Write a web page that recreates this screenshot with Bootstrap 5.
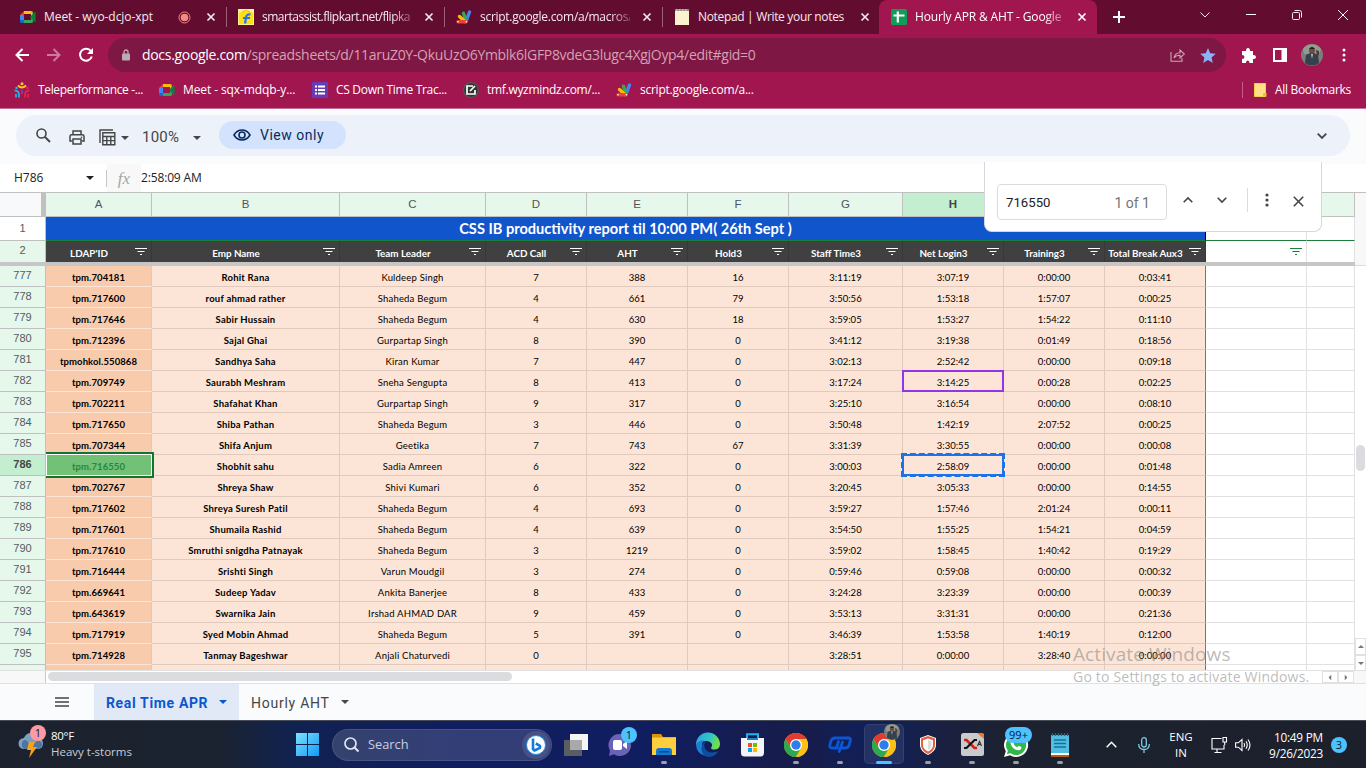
<!DOCTYPE html>
<html lang="en">
<head>
<meta charset="utf-8">
<title>Hourly APR &amp; AHT - Google Sheets</title>
<link href="https://cdn.jsdelivr.net/npm/bootstrap@5.3.0/dist/css/bootstrap.min.css" rel="stylesheet">
<style>
body{width:1366px;height:768px;overflow:hidden;font-family:"Open Sans","Noto Sans",sans-serif;font-size:12px;line-height:1;background:#fff;white-space:nowrap}
svg{display:block;flex:none;overflow:visible}
.ctr{display:flex;align-items:center;justify-content:center;flex:none}
.strip{height:34px;background:#620d30;color:#f6e9ee;padding-left:8px}
.tabx{width:218px;padding-left:12px;position:relative;letter-spacing:-.28px;font-size:12px}
.tabx .ttl{width:150px;margin-left:8px;line-height:18px}
.tabx .fade-r{-webkit-mask-image:linear-gradient(90deg,#000 130px,rgba(0,0,0,.25) 150px)}
.tabx .cls{margin-left:12px}
.tabx.sep::after{content:"";position:absolute;right:-1px;top:7px;width:1px;height:20px;background:#98637a}
.tabx.on{background:#a1164f;border-radius:8px 8px 0 0;color:#fff;margin-left:-1px;padding-left:12px}
.wc{width:46px;height:29px}
.navrow{height:38px;background:#a1164f}
.omni{width:1118px;height:34px;border-radius:17px;background:#7e1743;margin-left:6px}
.url{font-size:14px;letter-spacing:-.31px;color:#d3a1b6;margin-left:8px;line-height:20px}
.url b{font-weight:400;color:#fff}
.nb{width:32px;height:32px}
.books{height:37px;background:#a1164f;color:#fff;font-size:12px;letter-spacing:-.3px;border-bottom:1px solid #c8709a;padding-left:14px}
.bk{gap:8px;line-height:18px}
.w145{width:145px}.w153{width:153px}.w151{width:151px}
.gbar{height:55px;background:#f9fbfd;padding:6px 16px 8px}
.gpill{height:41px;border-radius:21px;background:#edf1fa;width:1334px;font-family:Roboto,sans-serif;color:#444746}
.vo{width:127px;height:28px;border-radius:14px;background:#d3e3fd;color:#0b2a5c;font-size:14px;letter-spacing:.52px;margin-bottom:1px}
.fbar{height:28px;background:#fff;color:#222;font-size:12px}
.fx{width:34px;height:28px;background:#f8f8f8;font-family:"Liberation Serif",serif;font-style:italic;font-size:17px;color:#a6a6a6}
.sheet{height:478px;position:relative;border-top:1px solid #c0c0c0;overflow:hidden;background:#fff}
.rw{display:grid;grid-template-columns:46px 106px 188px 146px 101px 101px 101px 114px 101px 101px 101px 101px 48px;width:1355px;height:21px}
.rw>div{display:flex;align-items:center;justify-content:center;border-right:1px solid #e1e1e1;border-bottom:1px solid #e1e1e1;overflow:hidden}
.rw .rn{font:11px "Liberation Sans",sans-serif;color:#575b5f;background:#e6f7ec;border-color:#c0c0c0;padding-bottom:3px}
.heads{height:24px}
.heads>div{background:#e6f7ec;font:11.500px "Liberation Sans",sans-serif;color:#50555a;border-color:#c0c0c0!important;padding-bottom:1px}
.heads>div.hot,.rn.hot{background:#c3eed0!important;font-weight:bold!important;color:#444!important}
.heads>div.corner{background:#f8f9fa;border-right:5px solid #c0c0c0}
.r1{height:24px}
.rw.r1>div{border-bottom:0}
.rw.r1 .rn{background:#fff;border-bottom:1px solid #c0c0c0;padding-bottom:1px}
.rw.r1 .title1{grid-column:2/12;background:#1155cc;color:#fff;font:bold 14.600px Lato,sans-serif;border-right:1px solid #000;border-bottom:1px solid #188038}
.rw.r1 .wh{border-bottom:1px solid #188038}
.rw.r2>div.dk{background:#404040;color:#fff;font:bold 9.850px Lato,sans-serif;border-right-color:#383838;border-bottom:0;justify-content:flex-start;padding-top:2px}
.dk span{flex:1;text-align:center}
.dk svg{margin-right:4px;margin-left:3px;margin-top:-1px}
.rw.r2>.rn{border-bottom:0}
.rw.r2>.wh{border-bottom:0;justify-content:flex-end;padding-right:4px}
.freeze{height:4px;width:1355px;background:#c6c6c6}
.rw.dat>.c{background:#fce5d6;border-color:#e0c9bd;font:9.5px Lato,sans-serif;color:#000;padding-top:3px}
.rw.dat>.c.a{background:#f8cbad;border-bottom-color:#fce5d6;font-weight:bold;letter-spacing:.1px}
.rw.dat>.c.b{font-weight:bold;letter-spacing:.22px}
.rw.dat>.c.c3{letter-spacing:.2px}
.rw.dat>.c.j{border-right-color:#757575}
.rw.dat>.c.picked{background:#72c177;color:#2a8540}
.mark1{position:absolute;left:46px;top:259px;width:108px;height:26px;border:2px solid #137333;border-left:0;box-shadow:inset 0 0 0 1px #fff}
.mark2{position:absolute;left:902px;top:177px;width:102px;height:22px;border:2px solid #9334e6}
.mark3{position:absolute;left:901px;top:260px;width:104px;height:24px;border:3px dashed #1a73e8}
.mark3::after{content:"";position:absolute;inset:-2px;border:2px solid #1a73e8}
.vsb{position:absolute;left:1355px;top:0;width:11px;height:477px;background:#f8f8f8}
.vsb .mid{margin-top:72px;height:373px;background:#fff;border-top:1px solid #dadce0}
.vthumb{position:absolute;left:1px;top:252px;width:9px;height:26px;border-radius:5px;background:#dadce0}
.sbtn{background:#fff;border:1px solid #e1e1e1}
.hsb{height:14px;border-top:1px solid #e1e1e1;border-bottom:1px solid #e1e1e1;background:#fff}
.hsb .lf{width:46px;height:12px;background:#f8f8f8;border-right:1px solid #c9c9c9}
.hsb .th{width:464px;height:9px;border-radius:5px;background:#dadce0;margin:0 811px 2px 2px}
.stabs{height:36px;background:#f9fbfd;font-family:Roboto,sans-serif;font-size:14px;color:#444746}
.stabs span{padding-top:2px}
.stabs .act{width:145px;height:36px;background:#e1e9f7;color:#0b57d0;font-weight:700;padding-left:12px;letter-spacing:.65px;margin-left:25px}
.find{position:absolute;left:984px;top:162px;width:338px;height:70px;background:#fff;border:1px solid #d5d8dc;border-top:0;border-radius:0 0 8px 8px;padding:22px 0 0 12px;align-items:flex-start;font-family:Roboto,sans-serif;color:#444746}
.find .inp{width:170px;height:36px;border:1px solid #dadce0;border-radius:4px;padding:1px 16px 0 8px;font-size:13.2px;color:#202124}
.find .inp span+span{color:#70757a;font-size:14px}
.find .ib{height:32px}
.wm{position:absolute;left:1073px;top:642px;color:rgba(130,130,130,.55)}
.wm .l1{font-size:19px;line-height:24px;letter-spacing:.1px}
.wm .l2{font-size:14px;line-height:22px;letter-spacing:.2px}
.tbar{height:48px;position:relative;background:linear-gradient(90deg,#1c222d 0,#1b2230 220px,#112250 290px,#101d60 460px,#101d5e 650px,#171c4a 800px,#10205a 880px,#1a2040 945px,#1c2230 1010px,#1c202b 1366px);border-top:1px solid #474c58;color:#fff;font-size:12px}
.srch{width:220px;height:32px;border-radius:16px;background:rgba(255,255,255,.15);border:1px solid rgba(255,255,255,.1);color:#c9cfe0;font-size:13px}
.ti{width:44px;height:47px;position:relative}
.ti.run::after{content:"";position:absolute;left:19px;top:40px;width:6px;height:3px;border-radius:2px;background:#9a9fac}
.ti.cur::before{content:"";position:absolute;left:2px;top:3px;width:40px;height:40px;border-radius:5px;background:rgba(255,255,255,.08);border:1px solid rgba(255,255,255,.08)}
.ti.cur::after{left:14px;width:16px;background:#4cc2ff}
.ti svg{position:relative}
.bdg{position:absolute;background:#4cc2ff;color:#05202f;height:16px;min-width:16px;border-radius:8px;font-size:11px;line-height:16px;text-align:center;z-index:2}
</style>
</head>
<body>
<svg width="0" height="0" class="position-absolute">
<defs>
<symbol id="x" viewBox="0 0 10 10"><path d="M1.5 1.5l7 7m0-7l-7 7" stroke="currentColor" stroke-width="1.7"/></symbol>
<symbol id="meet" viewBox="0 0 16 14"><path d="M4 1h7v3H4z" fill="#fbbc04"/><path d="M4 1v4H0z" fill="#ea4335"/><path d="M0 5h4v5H0z" fill="#4285f4"/><path d="M0 10h4v3H1.5Q0 13 0 11.500z" fill="#1967d2"/><path d="M4 10h7V4l1-3q1 0 1 1.500v9q0 1.500-1.500 1.500H4z" fill="#34a853"/><path d="M11 1q1.500 0 1.500 1.500V6L11 7z" fill="#fbbc04"/><path d="M10 7l4.500-4.800q1-.5 1 .5v8.600q0 1-1 .4z" fill="#0b8043"/></symbol>
<symbol id="gas" viewBox="0 0 16 14"><g fill="none" stroke-width="3.400" stroke-linecap="round"><path d="M13.500 2L10 11.500" stroke="#4285f4"/><path d="M7.500 3.200L10 11" stroke="#34a853"/><path d="M3.500 6.500L9 11.500" stroke="#fbbc04"/><path d="M2 11.800h8" stroke="#ea4335"/></g><circle cx="2" cy="11.800" r=".8" fill="#fff"/><circle cx="10.300" cy="11.800" r=".8" fill="#fff"/></symbol>
<symbol id="dn" viewBox="0 0 8 4"><path d="M0 0h8L4 4z" fill="currentColor"/></symbol>
<symbol id="flt" viewBox="0 0 12 8"><path d="M0 .5h12M2.500 3.500h7M5 6.500h2" stroke="currentColor" stroke-width="1"/></symbol>
<symbol id="chr" viewBox="0 0 24 24"><circle cx="12" cy="12" r="12" fill="#fbc116"/><path d="M12 6h10.400A12 12 0 0 0 1.600 6L6.800 15z" fill="#e33b2e"/><path d="M1.600 6A12 12 0 0 0 12 24l5.200-9L12 18 6.800 15z" fill="#2da94f"/><path d="M12 6h10.400A12 12 0 0 1 12 24l5.200-9z" fill="#fbc116"/><circle cx="12" cy="12" r="6" fill="#fff"/><circle cx="12" cy="12" r="4.700" fill="#2f7de9"/></symbol>
<symbol id="face" viewBox="0 0 22 22"><circle cx="11" cy="11" r="11" fill="#7b7e78"/><path d="M2 5a11 11 0 0 1 18 0l-2 5H3z" fill="#939b90"/><path d="M4 19l1-8 4-2h4l4 2 1 8a11 11 0 0 1-14 0z" fill="#35414f"/><circle cx="11" cy="6.500" r="3" fill="#6d4d40"/><path d="M8 5q3-4 6 0z" fill="#221d1d"/><path d="M10 10h2l-1 5z" fill="#bbb"/><path d="M15 6l3 1v4l-2 1z" fill="#4d3b35"/></symbol>
</defs>
</svg>

<!-- Browser tabs -->
<div class="strip d-flex">
  <div class="tabx sep d-flex align-items-center"><svg width="16" height="14"><use href="#meet"/></svg><div class="ttl" style="letter-spacing:-.06px">Meet - wyo-dcjo-xpt</div>
    <svg class="position-absolute" style="left:170px" width="13" height="13" viewBox="0 0 13 13"><circle cx="6.500" cy="6.500" r="5.500" fill="none" stroke="#f28b82"/><circle cx="6.500" cy="6.500" r="3.800" fill="#f28b82"/></svg>
    <div class="ctr cls"><svg width="10" height="10"><use href="#x"/></svg></div></div>
  <div class="tabx sep d-flex align-items-center"><svg width="16" height="16" viewBox="0 0 16 16"><path d="M0 0h16v16H0z" fill="#fff38a"/><path d="M1 4l2-1h10l2 1v11H1z" fill="#fde01a"/><path d="M4 3q4-3 8 0" fill="none" stroke="#e8b500"/><path d="M12.500 5.500q-4-.5-4.300 2.500L7 14.500M5 9h7" stroke="#2874f0" stroke-width="2.200" fill="none"/></svg><div class="ttl fade-r" style="letter-spacing:-.48px">smartassist.flipkart.net/flipka</div><div class="ctr cls"><svg width="10" height="10"><use href="#x"/></svg></div></div>
  <div class="tabx sep d-flex align-items-center"><svg width="16" height="14"><use href="#gas"/></svg><div class="ttl fade-r">script.google.com/a/macros/</div><div class="ctr cls"><svg width="10" height="10"><use href="#x"/></svg></div></div>
  <div class="tabx d-flex align-items-center"><svg width="16" height="16" viewBox="0 0 16 16"><path d="M1 1h14v15H1z" fill="#faf3cd"/><path d="M1 0h14v2H1z" fill="#8f8a80"/><path d="M2 1h12" stroke="#e6e0d0" stroke-dasharray="1.500 1.500"/></svg><div class="ttl" style="letter-spacing:-.33px">Notepad | Write your notes</div><div class="ctr cls"><svg width="10" height="10"><use href="#x"/></svg></div></div>
  <div class="tabx on d-flex align-items-center"><svg width="16" height="16" viewBox="0 0 16 16"><rect width="16" height="16" rx="1.500" fill="#0f9d58"/><path d="M2.500 6.500h11M6.800 2.500v11" stroke="#fff" stroke-width="2.200"/></svg><div class="ttl fade-r" style="letter-spacing:-.16px">Hourly APR &amp; AHT - Google</div><div class="ctr cls"><svg width="10" height="10"><use href="#x"/></svg></div></div>
  <div class="ctr" style="width:44px"><svg width="12" height="12" viewBox="0 0 12 12"><path d="M6 0v12M0 6h12" stroke="#fff" stroke-width="2"/></svg></div>
  <div class="ctr wc ms-auto"><svg width="10" height="6" viewBox="0 0 10 6"><path d="M.5.500L5 5 9.500.500" fill="none" stroke="#f6e9ee"/></svg></div>
  <div class="ctr wc"><svg width="10" height="2" viewBox="0 0 10 2"><path d="M0 .5h10" stroke="#fff"/></svg></div>
  <div class="ctr wc"><svg width="10" height="10" viewBox="0 0 10 10"><g fill="none" stroke="#f6e9ee"><rect x=".5" y="2.500" width="7" height="7" rx="1"/><path d="M2.500.500h5a2 2 0 0 1 2 2v5"/></g></svg></div>
  <div class="ctr wc"><svg width="10" height="10" viewBox="0 0 10 10"><path d="M0 0l10 10M10 0L0 10" stroke="#fff"/></svg></div>
</div>

<!-- Address row -->
<div class="navrow d-flex align-items-center" style="padding:4px 6px 0">
  <div class="ctr nb"><svg width="14" height="14" viewBox="0 0 14 14"><path d="M7.500 1L1.500 7l6 6M1.500 7H14" fill="none" stroke="#fff" stroke-width="2"/></svg></div>
  <div class="ctr nb"><svg width="14" height="14" viewBox="0 0 14 14"><path d="M6.500 1l6 6-6 6M12.500 7H0" fill="none" stroke="#cb7b9c" stroke-width="2"/></svg></div>
  <div class="ctr nb"><svg width="16" height="16" viewBox="0 0 16 16"><path d="M13 4.300A6 6 0 1 0 13.800 9.500" fill="none" stroke="#fff" stroke-width="2"/><path d="M15 1v6H9z" fill="#fff"/></svg></div>
  <div class="omni d-flex align-items-center" style="padding-left:12px"><svg width="12" height="12" viewBox="0 0 10 12"><rect x="1" y="4.500" width="8" height="7" rx="1" fill="#bcabb3"/><path d="M3 5V3a2 2 0 0 1 4 0v2" fill="none" stroke="#bcabb3" stroke-width="1.300"/></svg><div class="url" style="margin-left:10px"><b>docs.google.com</b>/spreadsheets/d/11aruZ0Y-QkuUzO6Ymblk6lGFP8vdeG3lugc4XgjOyp4/edit#gid=0</div>
    <div class="ms-auto d-flex pe-1"><div class="ctr" style="width:32px"><svg width="15" height="14" viewBox="0 0 15 14"><path d="M1 4v9.300h11V10M4 10q1-5 6-5.200V2l4.300 4L10 10V7.300Q6 7.300 4 10z" fill="none" stroke="#cba6b6" stroke-width="1.100"/></svg></div><div class="ctr" style="width:29px"><svg width="16" height="15" viewBox="0 0 16 15"><path d="M8 0l2.200 5.200 5.600.500-4.300 3.700 1.300 5.500L8 12l-4.800 2.900 1.300-5.500L.2 5.700l5.600-.5z" fill="#8ab4f8"/></svg></div></div></div>
  <div class="ctr" style="width:32px;margin-left:6px"><svg width="15" height="15" viewBox="0 0 15 15"><path d="M1 3h4q0-3 2-3t2 3h3v4q3 0 3 2t-3 2v4H8.500q0-2.500-1.800-2.500T5 15H1v-4q2.500 0 2.500-2T1 7z" fill="#fff"/></svg></div>
  <div class="ctr" style="width:32px"><svg width="14" height="14" viewBox="0 0 14 14"><path d="M1 1h12v12H1z" fill="none" stroke="#fff" stroke-width="2"/><path d="M8.500 1H13v12H8.500z" fill="#fff"/></svg></div>
  <div class="ctr" style="width:32px"><svg width="22" height="22"><use href="#face"/></svg></div>
  <div class="ctr" style="width:32px"><svg width="4" height="14" viewBox="0 0 4 14"><g fill="#fff"><circle cx="2" cy="2" r="1.500"/><circle cx="2" cy="7" r="1.500"/><circle cx="2" cy="12" r="1.500"/></g></svg></div>
</div>

<!-- Bookmarks -->
<div class="books d-flex align-items-center">
  <div class="bk d-flex align-items-center w145"><svg width="16" height="16" viewBox="0 0 16 16"><circle cx="8" cy="1.800" r="1.500" fill="#ffc72c"/><path d="M4 3.500q4 4 8 0" stroke="#ffc72c" stroke-width="1.800" fill="none"/><g fill="none" stroke-width="1.700"><path d="M.5 8.500Q5 8.500 5 13v2.500M2 12v3.500" stroke="#2fb5e8"/><path d="M15.500 8.500Q11 8.500 11 13v2.500M14 12v3.500" stroke="#e8254d"/><path d="M8 8v4" stroke="#8a3ab8"/></g><circle cx="2.500" cy="6" r="1.200" fill="#2fb5e8"/><circle cx="13.500" cy="6" r="1.200" fill="#e8254d"/></svg><span style="letter-spacing:-.36px">Teleperformance -...</span></div>
  <div class="bk d-flex align-items-center w153"><svg width="16" height="14"><use href="#meet"/></svg><span style="letter-spacing:-.1px">Meet - sqx-mdqb-y...</span></div>
  <div class="bk d-flex align-items-center w151"><svg width="16" height="16" viewBox="0 0 16 16"><rect width="16" height="16" rx="1" fill="#673ab7"/><path d="M3 4.500h2M6 4.500h7M3 8h2M6 8h7M3 11.500h2M6 11.500h7" stroke="#fff" stroke-width="1.800"/></svg>CS Down Time Trac...</div>
  <div class="bk d-flex align-items-center w153"><svg width="16" height="16" viewBox="0 0 16 16"><circle cx="8" cy="8" r="8" fill="#555"/><circle cx="8" cy="8" r="6.700" fill="#333"/><path d="M10 4H4v8h8V8M7 9l5-5" fill="none" stroke="#fff" stroke-width="1.700"/></svg>tmf.wyzmindz.com/...</div>
  <div class="bk d-flex align-items-center"><svg width="16" height="14"><use href="#gas"/></svg><span style="letter-spacing:-.25px">script.google.com/a...</span></div>
  <div class="bk d-flex align-items-center ms-auto" style="margin-right:15px;padding-left:11px;border-left:1px solid #c45c86;height:16px"><svg width="13" height="14" viewBox="0 0 13 14"><path d="M.5.500h11v13H.500z" fill="#ffe082" stroke="#f6cf52"/><path d="M9 10h3.500v3.500H9z" fill="#f0c030"/></svg><span>All Bookmarks</span></div>
</div>

<!-- Sheets toolbar -->
<div class="gbar">
 <div class="gpill d-flex align-items-center">
  <div class="ctr" style="width:32px;margin-left:11px"><svg width="15" height="15" viewBox="0 0 15 15"><circle cx="5.500" cy="5.500" r="4.500" fill="none" stroke="currentColor" stroke-width="1.600"/><path d="M9 9l5 5" stroke="currentColor" stroke-width="1.900"/></svg></div>
  <div class="ctr pt-1" style="width:36px"><svg width="16" height="15" viewBox="0 0 16 15"><path d="M4 4.500V1h8v3.500M3.500 11H1V6.500Q1 4.800 2.700 4.800h10.600Q15 4.800 15 6.500V11h-2.500" fill="none" stroke="currentColor" stroke-width="1.500"/><path d="M4 9h8v5H4z" fill="none" stroke="currentColor" stroke-width="1.500"/><circle cx="12.500" cy="7.200" r=".8" fill="currentColor"/></svg></div>
  <div class="ctr pt-1" style="width:24px"><svg width="17" height="17" viewBox="0 0 17 17"><g fill="none" stroke="currentColor" stroke-width="1.400"><path d="M1 14V1h13"/><path d="M3.800 3.800h12v12h-12zM3.800 7.500h12M3.800 11.600h12M7.800 7.500V16M11.800 7.500V16"/></g></svg></div>
  <svg class="mt-1" style="margin-left:2px" width="8" height="4"><use href="#dn"/></svg>
  <div class="mt-1" style="font-size:15px;width:37px;margin-left:13px;letter-spacing:.25px">100%</div>
  <svg class="mt-1" style="margin-left:14px" width="8" height="4"><use href="#dn"/></svg>
  <div class="vo d-flex align-items-center" style="padding-left:14px;margin-left:18px"><svg width="18" height="12" viewBox="0 0 18 12"><path d="M1 6q3-5 8-5t8 5q-3 5-8 5T1 6z" fill="none" stroke="currentColor" stroke-width="1.600"/><circle cx="9" cy="6" r="3" fill="none" stroke="currentColor" stroke-width="1.600"/></svg><span style="margin-left:9px">View only</span></div>
  <svg class="ms-auto" style="margin-right:23px" width="10" height="6" viewBox="0 0 10 6"><path d="M.7.700L5 5 9.300.700" fill="none" stroke="currentColor" stroke-width="1.800"/></svg>
 </div>
</div>

<!-- Formula bar -->
<div class="fbar d-flex align-items-center">
  <div style="width:86px;padding-left:14px">H786</div><svg width="8" height="4"><use href="#dn"/></svg>
  <div style="width:1px;height:17px;background:#c7c7c7;margin-left:12px"></div>
  <div class="fx ctr">fx</div><div style="letter-spacing:-.15px">2:58:09 AM</div>
</div>

<!-- Grid -->
<div class="sheet">
  <div class="rw heads" id="heads"></div>
  <div class="rw r1"><div class="rn">1</div><div class="title1">CSS IB productivity report til 10:00 PM( 26th Sept )</div><div class="wh"></div><div class="wh"></div></div>
  <div class="rw r2" id="r2"></div>
  <div class="freeze"></div>
  <div id="rows"></div>
  <div class="mark1"></div><div class="mark2"></div><div class="mark3"></div>
  <div class="vsb"><div class="mid"></div><div class="vthumb"></div><div class="sbtn ctr" style="height:17px"><svg width="6" height="3" style="transform:rotate(180deg);color:#777"><use href="#dn"/></svg></div><div class="sbtn ctr" style="height:16px"><svg width="6" height="3" style="color:#777"><use href="#dn"/></svg></div></div>
</div>
<div class="hsb d-flex align-items-center"><div class="lf"></div><div class="th"></div>
  <div class="sbtn ctr" style="width:16px;height:12px;margin-left:-1px"><svg width="6" height="3" style="transform:rotate(90deg);color:#777"><use href="#dn"/></svg></div><div class="sbtn ctr" style="width:16px;height:12px"><svg width="6" height="3" style="transform:rotate(-90deg);color:#777"><use href="#dn"/></svg></div><div style="width:12px;height:12px;background:#f8f8f8"></div></div>

<!-- Sheet tabs -->
<div class="stabs d-flex align-items-center">
  <svg style="margin-left:55px" width="14" height="10" viewBox="0 0 14 10"><path d="M0 1h14M0 5h14M0 9h14" stroke="#444746" stroke-width="1.500"/></svg>
  <div class="act d-flex align-items-center"><span style="width:113px">Real Time APR</span><svg width="8" height="4"><use href="#dn"/></svg></div>
  <span style="width:90px;margin-left:12px;letter-spacing:.75px">Hourly AHT</span><svg width="8" height="4"><use href="#dn"/></svg>
</div>

<!-- Find bar -->
<div class="find d-flex">
  <div class="inp d-flex align-items-center justify-content-between"><span>716550</span><span>1 of 1</span></div>
  <div class="ctr ib" style="width:34px;margin-left:4px"><svg width="10" height="6" viewBox="0 0 10 6"><path d="M.7 5.300L5 1l4.300 4.300" fill="none" stroke="currentColor" stroke-width="1.600"/></svg></div>
  <div class="ctr ib" style="width:34px"><svg width="10" height="6" viewBox="0 0 10 6"><path d="M.7.700L5 5 9.300.700" fill="none" stroke="currentColor" stroke-width="1.600"/></svg></div>
  <div style="width:1px;height:24px;background:#dadce0;margin:4px 0 0 8px"></div>
  <div class="ctr ib" style="width:38px"><svg width="4" height="14" viewBox="0 0 4 14"><g fill="currentColor"><circle cx="2" cy="2" r="1.600"/><circle cx="2" cy="7" r="1.600"/><circle cx="2" cy="12" r="1.600"/></g></svg></div>
  <div class="ctr ib" style="width:24px;padding-top:2px"><svg width="11" height="11" viewBox="0 0 11 11"><path d="M.8.800l9.400 9.400m0-9.400L.8 10.200" stroke="currentColor" stroke-width="1.600"/></svg></div>
</div>

<div class="wm"><div class="l1">Activate Windows</div><div class="l2">Go to Settings to activate Windows.</div></div>

<!-- Taskbar -->
<div class="tbar d-flex align-items-center">
  <div class="position-relative d-flex align-items-center" style="width:284px;padding-left:18px">
    <svg width="26" height="26" viewBox="0 0 26 26"><path d="M6 17a5.500 5.500 0 0 1 0-11q2-5 7-5t6 5q6 0 6 5.500T19 17z" fill="#7aa0c4"/><path d="M6 17a5.500 5.500 0 0 1 0-9q4 0 5 4t9-4q5 2 4 6-2 3-5 3z" fill="#4e759c"/><path d="M11 10h6l-2 5h4l-8 11 2-8H9z" fill="#f9a11b"/></svg>
    <div class="bdg" style="left:30px;top:-4px;background:#ff99a4">1</div>
    <div style="margin-left:7px;line-height:16px;font-size:11.500px;margin-top:-1px"><div style="letter-spacing:-.3px">80°F</div><div style="color:#c9ccd2">Heavy t-storms</div></div>
  </div>
  <div class="ctr" style="width:47px"><svg width="23" height="23" viewBox="0 0 23 23"><defs><linearGradient id="wg" x1="0" y1="0" x2="1" y2="1"><stop stop-color="#7fe0ff"/><stop offset="1" stop-color="#0f9bf5"/></linearGradient></defs><path d="M0 0h11v11H0zM12 0h11v11H12zM0 12h11v11H0zM12 12h11v11H12z" fill="url(#wg)"/></svg></div>
  <div class="srch d-flex align-items-center" style="padding-left:11px;margin-left:1px"><svg width="15" height="15" viewBox="0 0 15 15"><circle cx="6.500" cy="6.500" r="5.500" fill="none" stroke="#e3e6f0" stroke-width="1.700"/><path d="M10.500 10.500l4 4" stroke="#e3e6f0" stroke-width="1.900"/></svg><span style="margin-left:9px;font-size:12.800px">Search</span>
   <div class="ctr ms-auto" style="margin-right:1px;width:28px;height:28px;border-radius:50%;background:rgba(255,255,255,.1)"><svg width="20" height="20" viewBox="0 0 20 20"><circle cx="10" cy="10" r="9.500" fill="#fff" stroke="#1b8fe8"/><path d="M7 3.500V14l1.500 1.500L14 12.800v-2L9.800 8.500" fill="none" stroke="#1479dc" stroke-width="2.600" stroke-linejoin="round"/></svg></div></div>
  <div class="d-flex" style="margin-left:2px">
   <div class="ti ctr"><svg width="24" height="22" viewBox="0 0 24 22"><path d="M6 0h18v16H6z" fill="#f5f5f5"/><path d="M0 6h18v16H0z" fill="#5a5d62"/><path d="M6 6h12v10H6z" fill="#a9a9ac"/></svg></div>
   <div class="ti ctr"><svg width="24" height="24" viewBox="0 0 24 24"><path d="M12 1a11 11 0 1 1-6 20.200L1 23l1-5.500A11 11 0 0 1 12 1z" fill="#6a62b8"/><rect x="5" y="7" width="9" height="10" rx="2" fill="#fff"/><path d="M15 11l4-3v8l-4-3z" fill="#fff"/></svg><div class="bdg" style="left:23px;top:6px">1</div></div>
   <div class="ti run ctr"><svg width="24" height="22" viewBox="0 0 24 22"><path d="M0 0h9l2 3h13v6H0z" fill="#d9950c"/><path d="M0 3.500h24V21H0z" fill="#ffce3d"/><path d="M4 21v-4q0-3 3-3h10q3 0 3 3v4z" fill="#1279cf"/><path d="M7 17h10v1.500H7z" fill="#0a4f93"/></svg></div>
   <div class="ti ctr"><svg width="24" height="24" viewBox="0 0 24 24"><defs><linearGradient id="eg" x1="0" y1="0" x2="1" y2=".3"><stop stop-color="#2b9ce5"/><stop offset=".6" stop-color="#30c5c9"/><stop offset="1" stop-color="#6fe04c"/></linearGradient></defs><path d="M0 12A12 12 0 0 1 24 11q0 5-5 5.500-4 .3-4-2 1.500-1 1-3Q15 8 10 8T0 12z" fill="url(#eg)"/><path d="M0 12q2-5 8-4.500Q4 12 8 17q4 5 13 2A12 12 0 0 1 0 12z" fill="#1b7fd6"/><path d="M10 8.500q-3 3-1 7t7 4q4 0 6.500-1.500Q19 24 12 24 5 22 5.500 15 6 10 10 8.500z" fill="#0e4e9e"/></svg></div>
   <div class="ti ctr"><svg width="23" height="24" viewBox="0 0 23 24"><path d="M6 7V1.200h11V7" fill="none" stroke="#22b4ee" stroke-width="2"/><path d="M0 5h23v15q0 3.500-3.500 3.500h-16Q0 23.500 0 20z" fill="#f3f4f6"/><path d="M6 5h11v2H6z" fill="#1689c4"/><path d="M7 10h4v4H7z" fill="#f25022"/><path d="M12 10h4v4h-4z" fill="#7fba00"/><path d="M7 15h4v4H7z" fill="#00a4ef"/><path d="M12 15h4v4h-4z" fill="#ffb900"/></svg></div>
   <div class="ti run ctr"><svg width="24" height="24"><use href="#chr"/></svg></div>
   <div class="ti run ctr"><svg width="24" height="18" viewBox="0 0 24 18"><path d="M9.500 12H4Q1 12 2 8.500L3 5q1-3 4-3h13.500q2.500 0 1.700 3l-1 4q-1 3-4 3H14M10.500 5.500L8.500 12M14.500 6l-3.300 9.500" fill="none" stroke="#0b56d4" stroke-width="2.800" stroke-linecap="round"/></svg></div>
   <div class="ti run cur ctr"><svg width="24" height="24"><use href="#chr"/></svg><svg class="position-absolute" style="left:22px;top:3px" width="16" height="16"><use href="#face"/></svg></div>
   <div class="ti run ctr"><svg width="16" height="20" viewBox="0 0 16 20"><path d="M8 0l8 3v8q-1 6-8 9-7-3-8-9V3z" fill="#fff"/><path d="M8 1l7 2.500V11q-1 5-7 8-6-3-7-8V3.500z" fill="#e2603f"/><path d="M8 3.500l5 1.700V11q-1 3.500-5 5.500-4-2-5-5.500V5.200z" fill="#fff"/><path d="M8 5l3.500 1.200V11Q11 13 8 15z" fill="#ddd"/></svg></div>
   <div class="ti run ctr"><svg width="23" height="23" viewBox="0 0 23 23"><rect width="23" height="23" rx="2.500" fill="#c9cacc"/><path d="M16 0h4.500Q23 0 23 3v3z" fill="#f07820"/><path d="M3 7h2.500l8 8H16" fill="none" stroke="#d41c1c" stroke-width="2.600"/><path d="M16 7h-2.500l-8 8H3" fill="none" stroke="#111" stroke-width="2.200"/><path d="M16.500 13l2-4.500 2 4.500m-3.300-1.500h2.600" fill="none" stroke="#333" stroke-width="1.200"/></svg></div>
   <div class="ti run ctr"><svg width="24" height="24" viewBox="0 0 24 24"><path d="M12 0a12 12 0 1 1-6 22.300L0 24l1.800-5.800A12 12 0 0 1 12 0z" fill="#fff"/><path d="M12 2a10 10 0 1 1-5.500 18.300L2.800 21.300l1.100-3.500A10 10 0 0 1 12 2z" fill="#34b74a"/><path d="M8 6.500l1.500 0 1.200 2.800-1.200 1.500q1.200 2.400 3.700 3.500l1.400-1.500 2.800 1.300q.3 2.900-3 3.100Q8 16.500 6.500 10q0-2.500 1.500-3.500z" fill="#fff"/></svg><div class="bdg" style="left:11px;top:6px;width:27px">99+</div></div>
   <div class="ti run ctr"><svg width="18" height="24" viewBox="0 0 18 24"><path d="M0 2h18v20H0z" fill="#52bde0"/><path d="M0 20h18v2H0z" fill="#fff"/><path d="M0 22h18v2H0z" fill="#b85c12"/><path d="M1.500 0v3M4.500 0v3M7.500 0v3M10.500 0v3M13.500 0v3M16.500 0v3" stroke="#1d6b8c" stroke-width="1.300"/><path d="M3 7h12M3 10.500h12M3 14h12" stroke="#1470a0" stroke-width="1.500"/></svg></div>
  </div>
  <div class="ctr" style="width:34px;margin-left:12px"><svg width="11" height="7" viewBox="0 0 11 7"><path d="M.7 6.300l4.800-5 4.800 5" fill="none" stroke="#fff" stroke-width="1.500"/></svg></div>
  <div class="ctr" style="width:31px"><svg width="12" height="16" viewBox="0 0 12 16"><g fill="none" stroke="#7fc9e0" stroke-width="1.300"><rect x="3.700" y=".7" width="4.600" height="9.300" rx="2.300"/><path d="M.7 7q0 5.500 5.300 5.500T11.300 7M6 12.500V16"/></g></svg></div>
  <div class="text-center" style="width:44px;line-height:16px;font-size:11.500px">ENG<br>IN</div>
  <div class="ctr" style="width:32px"><svg width="16" height="16" viewBox="0 0 16 16"><g fill="none" stroke="#fff" stroke-width="1.100"><path d="M10.500 1.500H1v10.500h12V8M6 12v3.500M3.500 15.500h7M12 .500h3.500v4.500H12zM13.700 5v3"/></g></svg></div>
  <div class="ctr" style="width:16px"><svg width="16" height="14" viewBox="0 0 16 14"><g fill="none" stroke="#fff" stroke-width="1.100"><path d="M.6 4.800h2.700L7 1.500v11L3.300 9.200H.6z"/><path d="M9 5q1.300 2 0 4M11 3.300q2.500 3.700 0 7.400M13 1.500q4 5.500 0 11"/></g></svg></div>
  <div class="text-end" style="width:72px;line-height:16px;font-size:11.800px;letter-spacing:-.22px">10:49 PM<br>9/26/2023</div>
  <div class="bdg position-static" style="width:16px;margin-left:8px">3</div>
</div>

<script src="https://cdn.jsdelivr.net/npm/bootstrap@5.3.0/dist/js/bootstrap.bundle.min.js"></script>
<script>
const filter='<svg width="12" height="8"><use href="#flt"/></svg>';
document.getElementById('heads').innerHTML='<div class="corner"></div>'+[...'ABCDEFGHIJKL'].map(c=>`<div class="${c==='H'?'hot':''}">${c==='L'?'':c}</div>`).join('');
document.getElementById('r2').innerHTML='<div class="rn">2</div>'+["LDAP'ID",'Emp Name','Team Leader','ACD Call','AHT','Hold3','Staff Time3','Net Login3','Training3','Total Break Aux3'].map(t=>`<div class="dk"><span>${t}</span>${filter}</div>`).join('')+`<div class="wh" style="color:#188038">${filter}</div><div class="wh"></div>`;
const data=`777|tpm.704181|Rohit Rana|Kuldeep Singh|7|388|16|3:11:19|3:07:19|0:00:00|0:03:41
778|tpm.717600|rouf ahmad rather|Shaheda Begum|4|661|79|3:50:56|1:53:18|1:57:07|0:00:25
779|tpm.717646|Sabir Hussain|Shaheda Begum|4|630|18|3:59:05|1:53:27|1:54:22|0:11:10
780|tpm.712396|Sajal Ghai|Gurpartap Singh|8|390|0|3:41:12|3:19:38|0:01:49|0:18:56
781|tpmohkol.550868|Sandhya Saha|Kiran Kumar|7|447|0|3:02:13|2:52:42|0:00:00|0:09:18
782|tpm.709749|Saurabh Meshram|Sneha Sengupta|8|413|0|3:17:24|3:14:25|0:00:28|0:02:25
783|tpm.702211|Shafahat Khan|Gurpartap Singh|9|317|0|3:25:10|3:16:54|0:00:00|0:08:10
784|tpm.717650|Shiba Pathan|Shaheda Begum|3|446|0|3:50:48|1:42:19|2:07:52|0:00:25
785|tpm.707344|Shifa Anjum|Geetika|7|743|67|3:31:39|3:30:55|0:00:00|0:00:08
786|tpm.716550|Shobhit sahu|Sadia Amreen|6|322|0|3:00:03|2:58:09|0:00:00|0:01:48
787|tpm.702767|Shreya Shaw|Shivi Kumari|6|352|0|3:20:45|3:05:33|0:00:00|0:14:55
788|tpm.717602|Shreya Suresh Patil|Shaheda Begum|4|693|0|3:59:27|1:57:46|2:01:24|0:00:11
789|tpm.717601|Shumaila Rashid|Shaheda Begum|4|639|0|3:54:50|1:55:25|1:54:21|0:04:59
790|tpm.717610|Smruthi snigdha Patnayak|Shaheda Begum|3|1219|0|3:59:02|1:58:45|1:40:42|0:19:29
791|tpm.716444|Srishti Singh|Varun Moudgil|3|274|0|0:59:46|0:59:08|0:00:00|0:00:32
792|tpm.669641|Sudeep Yadav|Ankita Banerjee|8|433|0|3:24:28|3:23:39|0:00:00|0:00:39
793|tpm.643619|Swarnika Jain|Irshad AHMAD DAR|9|459|0|3:53:13|3:31:31|0:00:00|0:21:36
794|tpm.717919|Syed Mobin Ahmad|Shaheda Begum|5|391|0|3:46:39|1:53:58|1:40:19|0:12:00
795|tpm.714928|Tanmay Bageshwar|Anjali Chaturvedi|0|||3:28:51|0:00:00|3:28:40|0:00:00
||||||||||`;
const cls=['a','b','c3','','','','','','','j'];
document.getElementById('rows').innerHTML=data.split('\n').map(l=>{const f=l.split('|');return `<div class="rw dat"><div class="rn ${f[0]==='786'?'hot':''}">${f[0]}</div>`+f.slice(1).map((t,i)=>`<div class="c ${cls[i]} ${i===0&&f[0]==='786'?'picked':''}">${t}</div>`).join('')+'<div></div><div></div></div>'}).join('');
</script>
</body>
</html>
